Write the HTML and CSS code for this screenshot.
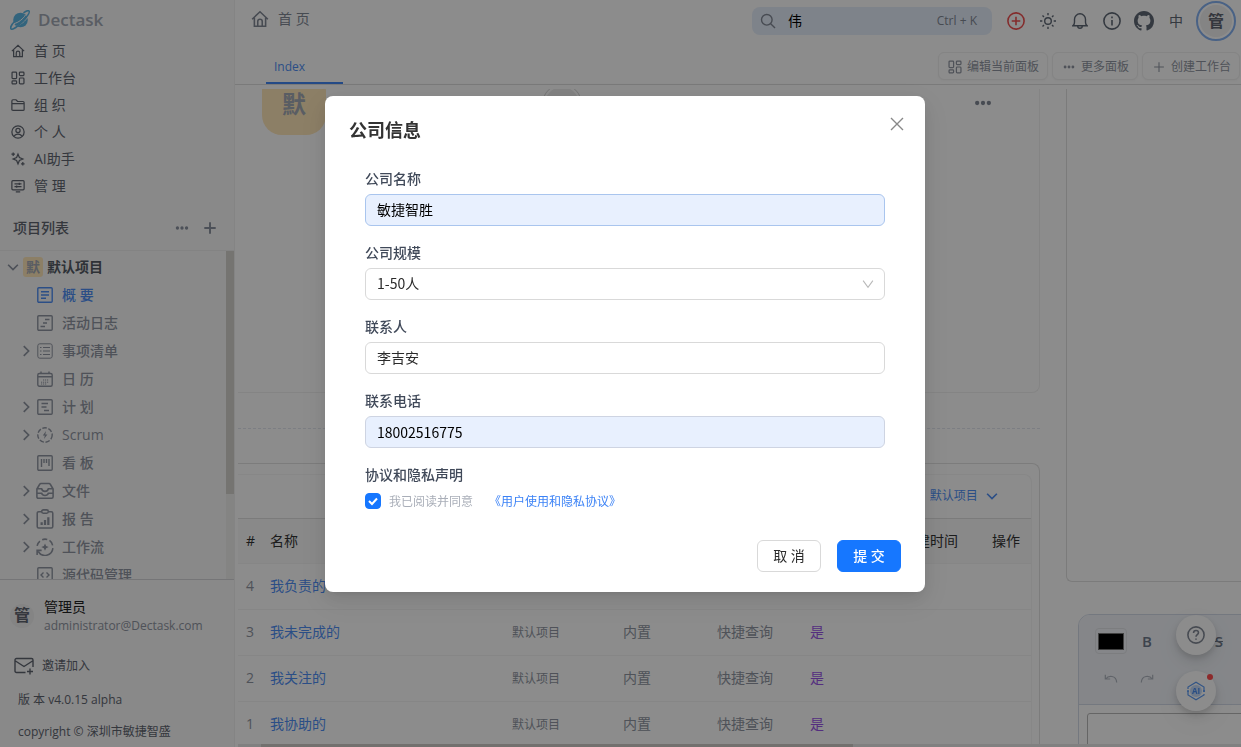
FILE: index.html
```html
<!DOCTYPE html>
<html lang="zh-CN">
<head>
<meta charset="utf-8">
<meta name="viewport" content="width=device-width, initial-scale=1">
<title>Dectask</title>
<link rel="stylesheet" href="styles.css">
</head>
<body>
<svg class="sprite" aria-hidden="true">
  <symbol id="home" viewBox="0 0 16 16"><path d="M1 8.2 8 1.6l7 6.6M3 6.8v7.7h10V6.8M6 14.2v-4a2 2 0 0 1 4 0v4"/></symbol>
  <symbol id="board" viewBox="0 0 16 16"><rect x="1.2" y="1.2" width="5.2" height="7.4" rx="1"/><rect x="9.6" y="1.2" width="5.2" height="4.2" rx="1"/><rect x="1.2" y="11.2" width="5.2" height="3.6" rx="1"/><rect x="9.6" y="8" width="5.2" height="6.8" rx="1"/></symbol>
  <symbol id="folder" viewBox="0 0 16 16"><path d="M1 13V3.4C1 2.6 1.5 2 2.3 2h3.4l1.8 2h6.2c.8 0 1.3.6 1.3 1.4V13c0 .8-.5 1.2-1.3 1.2H2.3C1.5 14.2 1 13.8 1 13zM1 6.5h14"/></symbol>
  <symbol id="person" viewBox="0 0 16 16"><circle cx="8" cy="8" r="7"/><circle cx="8" cy="6.2" r="2.4"/><path d="M3.6 13c.8-2 2.4-2.6 4.4-2.600s3.600.6 4.400 2.600"/></symbol>
  <symbol id="spark" viewBox="0 0 16 16"><path d="M8 2.500 9.600 6.400 13.500 8 9.600 9.600 8 13.500 6.400 9.600 2.500 8l3.900-1.600zM2.500.5v4M.5 2.500h4M13.500 11.500v4M11.500 13.500h4"/></symbol>
  <symbol id="manage" viewBox="0 0 16 16"><rect x="1" y="1.800" width="14" height="10.600" rx="1.200"/><path d="M4 5.500h8M9.500 4.200v2.600M4 8.800h8M6.500 7.500v2.600M5.500 14.600h5"/></symbol>
  <symbol id="dots" viewBox="0 0 16 16"><g fill="currentColor" stroke="none"><circle cx="2.800" cy="8" r="1.900"/><circle cx="8" cy="8" r="1.900"/><circle cx="13.200" cy="8" r="1.900"/></g></symbol>
  <symbol id="plus" viewBox="0 0 16 16"><path d="M8 1.500v13M1.500 8h13"/></symbol>
  <symbol id="down" viewBox="0 0 16 16"><path d="M1.500 5 8 11.500 14.500 5"/></symbol>
  <symbol id="caret" viewBox="0 0 16 16"><path d="M1.500 3.500 8 12.500l6.500-9"/></symbol>
  <symbol id="right" viewBox="0 0 16 16"><path d="M5 1.500 11.500 8 5 14.500"/></symbol>
  <symbol id="overview" viewBox="0 0 16 16"><rect x=".8" y=".8" width="14.400" height="14.400" rx="1"/><path d="M4 4.800h8M4 8h8M4 11.200h5"/></symbol>
  <symbol id="log" viewBox="0 0 16 16"><rect x=".8" y=".8" width="14.400" height="14.400" rx="1"/><path d="M8 4.500h4.500M6 8h4M3.500 11.500H8"/></symbol>
  <symbol id="list" viewBox="0 0 16 16"><rect x=".8" y=".8" width="14.400" height="14.400" rx="2"/><path d="M3 4.500h1.500M6 4.500h7M3 8h1.500M6 8h7M3 11.500h1.500M6 11.500h7"/></symbol>
  <symbol id="calendar" viewBox="0 0 16 16"><rect x=".8" y="2.500" width="14.400" height="12.700" rx="1.500"/><path d="M1 5.800h14M4 .5v2.500M12 .5v2.500"/><path d="M6 9h6M4 11.200h8M4 13h6" stroke-dasharray="1.200 .8" stroke-width="1"/></symbol>
  <symbol id="plan" viewBox="0 0 16 16"><rect x=".8" y=".8" width="14.400" height="14.400" rx="1"/><path d="M4.500 4.500h6.500M4.500 8h5M7 11.500h5"/></symbol>
  <symbol id="scrum" viewBox="0 0 16 16"><circle cx="8" cy="8" r="7.200" stroke-dasharray="4.500 1.700"/><path d="M9 4 5.800 8.500h2L7 12l3.400-4.500H8.300z" fill="currentColor" stroke="none"/></symbol>
  <symbol id="kanban" viewBox="0 0 16 16"><rect x=".8" y=".8" width="14.400" height="14.400" rx="1"/><path d="M4.500 4v8M7 4v4M9.500 4v4M12 4v7"/></symbol>
  <symbol id="files" viewBox="0 0 16 16"><path d="M.8 6.200 3.300 2c.3-.4.600-.6 1.100-.6h7.200c.5 0 .8.200 1.100.6l2.500 4.200v7c0 .8-.5 1.300-1.300 1.300H2.100c-.8 0-1.300-.5-1.300-1.300zM1 6h4c.5 1.800 1.500 2.300 3 2.300S10.500 7.800 11 6h4M1 10h4c.5 1.500 1.500 2 3 2s2.500-.5 3-2h4"/></symbol>
  <symbol id="report" viewBox="0 0 16 18"><path d="M5 2.500H2.300C1.500 2.500 1 3 1 3.800v12c0 .8.5 1.300 1.300 1.300h11.400c.8 0 1.300-.5 1.300-1.300v-12c0-.8-.5-1.300-1.300-1.300H11"/><rect x="5" y=".8" width="6" height="3" rx="1.500"/><path d="M5 12v2.500M8 10v4.500M11 7.500v7" stroke-width="2"/></symbol>
  <symbol id="flow" viewBox="0 0 16 16"><path d="M1 7A7 7 0 0 1 3.500 2.700M5.500 1.500a7 7 0 0 1 4.500-.2M12 2.200A7 7 0 0 1 14.800 6.500M15 9A7 7 0 0 1 2 12M1 15v-4h4"/><path d="m8 4.800 1 2.300 2.300.9L9 9l-1 2.300L7 9l-2.300-1L7 7.100z" fill="currentColor" stroke="none"/></symbol>
  <symbol id="code" viewBox="0 0 16 16"><rect x=".8" y=".8" width="14.400" height="14.400" rx="1"/><path d="M6.500 5.500 4 8l2.500 2.500M9.500 5.500 12 8l-2.500 2.500"/></symbol>
  <symbol id="mail" viewBox="0 0 20 18"><path d="M11.500 15.500H2.500c-.9 0-1.500-.6-1.500-1.500V3c0-.9.600-1.500 1.500-1.500h15c.9 0 1.500.6 1.500 1.500v7M1.500 4l8.500 5.500L18.500 4M16 11.500v6M13 14.500h6"/></symbol>
  <symbol id="search" viewBox="0 0 16 16"><circle cx="6.800" cy="6.800" r="5.300"/><path d="m10.700 10.700 4.300 4.300"/></symbol>
  <symbol id="pluscircle" viewBox="0 0 16 16"><circle cx="8" cy="8" r="7.200"/><path d="M8 4.200v7.600M4.200 8h7.600"/></symbol>
  <symbol id="sun" viewBox="0 0 16 16"><circle cx="8" cy="8" r="3.300"/><path d="M8 0v2.300M8 13.700V16M0 8h2.300M13.700 8H16M2.500 2.500l1.500 1.500M12 12l1.500 1.500M2.500 13.500 4 12M12 4l1.500-1.500"/></symbol>
  <symbol id="bell" viewBox="0 0 16 16"><path d="M.8 12.800h14.400c-1.200-1-1.700-2-1.700-3.600V6.300a5.500 5.500 0 0 0-11 0v2.900c0 1.600-.5 2.600-1.700 3.600zM5.700 13a2.300 2.300 0 0 0 4.600 0"/></symbol>
  <symbol id="info" viewBox="0 0 16 16"><circle cx="8" cy="8" r="7.200"/><path d="M8 7v5M8 4v1.500"/></symbol>
  <symbol id="github" viewBox="0 0 16 16"><path fill="currentColor" stroke="none" d="M8 0C3.580 0 0 3.580 0 8c0 3.540 2.290 6.530 5.470 7.590.4.070.55-.17.55-.38 0-.19-.01-.82-.01-1.490-2.010.37-2.530-.49-2.690-.94-.09-.23-.48-.94-.82-1.130-.28-.15-.68-.52-.01-.53.63-.01 1.080.58 1.230.82.72 1.210 1.870.87 2.330.66.070-.52.280-.87.510-1.070-1.780-.2-3.640-.89-3.640-3.950 0-.87.310-1.590.82-2.150-.08-.2-.36-1.020.08-2.120 0 0 .67-.21 2.200.82.640-.18 1.320-.27 2-.27s1.360.09 2 .27c1.530-1.040 2.200-.82 2.200-.82.440 1.100.16 1.920.08 2.120.51.560.82 1.270.82 2.150 0 3.070-1.870 3.750-3.650 3.950.29.250.54.730.54 1.480 0 1.070-.01 1.930-.01 2.200 0 .21.15.46.55.38A8.010 8.010 0 0 0 16 8c0-4.420-3.580-8-8-8z"/></symbol>
  <symbol id="close" viewBox="0 0 16 16"><path d="m2 2 12 12M14 2 2 14"/></symbol>
  <symbol id="undo" viewBox="0 0 16 12"><path d="M1.500 1v5H7M2 6c3-4.500 12-4.500 12.500 4"/></symbol>
  <symbol id="redo" viewBox="0 0 16 12"><path d="M14.500 1v5H9M14 6C11 1.500 2 1.500 1.500 10"/></symbol>
  <symbol id="help" viewBox="0 0 16 16"><circle cx="8" cy="8" r="7.200"/><path d="M5.800 6.300c0-1.500 1-2.300 2.200-2.300s2.200.8 2.200 2c0 1.600-2.200 1.700-2.200 3.500M8 11v1.300"/></symbol>
</svg>

<div class="app">
  <aside class="sidebar">
    <div class="brand">
      <svg class="brand-logo" viewBox="0 0 20 20" aria-hidden="true"><circle cx="10.500" cy="10" r="7.300" fill="#5cb6e4"/><path d="M4 13.500C8 13 13.500 8.500 15.500 5M6.500 16c4-1 9.500-5.500 11-9" fill="none" stroke="#fff" stroke-width="1"/><path d="M4.500 11.500C1 15 .3 18 1 19c1.500 1.200 7-2.500 12-8S20 2 19 1c-.7-.7-3 0-5.500 1.800" fill="none" stroke="#5cb6e4" stroke-width="1.600"/></svg>
      <span>Dectask</span>
    </div>
    <nav class="menu">
      <a href="#"><svg class="icon i14"><use href="#home"/></svg>首 页</a>
      <a href="#"><svg class="icon i14"><use href="#board"/></svg>工作台</a>
      <a href="#"><svg class="icon i14"><use href="#folder"/></svg>组 织</a>
      <a href="#"><svg class="icon i14"><use href="#person"/></svg>个 人</a>
      <a href="#"><svg class="icon i14"><use href="#spark"/></svg>AI助手</a>
      <a href="#"><svg class="icon i14"><use href="#manage"/></svg>管 理</a>
    </nav>
    <div class="section">
      <h2>项目列表</h2>
      <button class="plain" aria-label="更多"><svg class="icon i14"><use href="#dots"/></svg></button>
      <button class="plain" aria-label="新建项目"><svg class="icon i14 bold"><use href="#plus"/></svg></button>
    </div>
    <div class="tree-wrap">
      <nav class="tree">
        <a class="root" href="#"><svg class="icon i12 bold"><use href="#down"/></svg><span class="tile">默</span>默认项目</a>
        <a class="leaf current" href="#"><i></i><svg class="icon i16"><use href="#overview"/></svg><span>概 要</span></a>
        <a class="leaf" href="#"><i></i><svg class="icon i16"><use href="#log"/></svg><span>活动日志</span></a>
        <a class="leaf" href="#"><svg class="icon i12 bold"><use href="#right"/></svg><svg class="icon i16 thin"><use href="#list"/></svg><span>事项清单</span></a>
        <a class="leaf" href="#"><i></i><svg class="icon i16"><use href="#calendar"/></svg><span>日 历</span></a>
        <a class="leaf" href="#"><svg class="icon i12 bold"><use href="#right"/></svg><svg class="icon i16"><use href="#plan"/></svg><span>计 划</span></a>
        <a class="leaf" href="#"><svg class="icon i12 bold"><use href="#right"/></svg><svg class="icon i16"><use href="#scrum"/></svg><span>Scrum</span></a>
        <a class="leaf" href="#"><i></i><svg class="icon i16"><use href="#kanban"/></svg><span>看 板</span></a>
        <a class="leaf" href="#"><svg class="icon i12 bold"><use href="#right"/></svg><svg class="icon i18"><use href="#files"/></svg><span>文件</span></a>
        <a class="leaf" href="#"><svg class="icon i12 bold"><use href="#right"/></svg><svg class="icon i20"><use href="#report"/></svg><span>报 告</span></a>
        <a class="leaf" href="#"><svg class="icon i12 bold"><use href="#right"/></svg><svg class="icon i18"><use href="#flow"/></svg><span>工作流</span></a>
        <a class="leaf" href="#"><i></i><svg class="icon i16"><use href="#code"/></svg><span>源代码管理</span></a>
      </nav>
      <div class="vbar"><div class="vthumb"></div></div>
    </div>
    <footer class="side-foot">
      <div class="user">
        <span class="user-avatar">管</span>
        <div><div class="user-name">管理员</div><div class="user-mail">administrator@Dectask.com</div></div>
      </div>
      <a class="invite" href="#"><svg class="icon i20"><use href="#mail"/></svg>邀请加入</a>
      <p>版 本 v4.0.15 alpha</p>
      <p>copyright © 深圳市敏捷智盛</p>
    </footer>
  </aside>

  <main class="main">
    <header class="topbar">
      <a class="crumb" href="#"><svg class="icon i18"><use href="#home"/></svg>首 页</a>
      <label class="search"><svg class="icon i16"><use href="#search"/></svg><input type="text" value="伟" aria-label="搜索"><kbd>Ctrl + K</kbd></label>
      <div class="tools">
        <button class="plain add" aria-label="新建"><svg class="icon i18"><use href="#pluscircle"/></svg></button>
        <button class="plain" aria-label="主题"><svg class="icon i16"><use href="#sun"/></svg></button>
        <button class="plain" aria-label="通知"><svg class="icon i16"><use href="#bell"/></svg></button>
        <button class="plain" aria-label="关于"><svg class="icon i18"><use href="#info"/></svg></button>
        <button class="plain" aria-label="GitHub"><svg class="icon i20"><use href="#github"/></svg></button>
        <button class="plain">中</button>
      </div>
      <button class="plain me" aria-label="账户"><span>管</span></button>
    </header>
    <div class="tabs">
      <a class="tab" href="#">Index</a>
      <div class="tab-actions">
        <button class="chip"><svg class="icon i14"><use href="#board"/></svg>编辑当前面板</button>
        <button class="chip wide"><svg class="icon i12"><use href="#dots"/></svg>更多面板</button>
        <button class="chip wide"><svg class="icon i12"><use href="#plus"/></svg>创建工作台</button>
      </div>
    </div>

    <div class="viewport">
      <div class="canvas">
        <div class="column">
          <section class="project">
            <span class="project-tile">默</span>
            <span class="project-dot"></span>
            <button class="plain" aria-label="更多操作"><svg class="icon i18"><use href="#dots"/></svg></button>
          </section>
          <hr class="split">
          <section class="panel">
            <div class="panel-inner">
              <div class="panel-head"><button class="plain filter">默认项目<svg class="icon i12 bold"><use href="#down"/></svg></button></div>
              <table>
                <thead><tr><th class="c-id">#</th><th class="c-name">名称</th><th class="c-project"></th><th class="c-kind"></th><th class="c-type"></th><th class="c-flag"></th><th class="c-time">创建时间</th><th>操作</th></tr></thead>
                <tbody>
                  <tr><td>4</td><td><a href="#">我负责的</a></td><td></td><td></td><td></td><td></td><td></td><td></td></tr>
                  <tr><td>3</td><td><a href="#">我未完成的</a></td><td class="small">默认项目</td><td>内置</td><td>快捷查询</td><td class="yes">是</td><td></td><td></td></tr>
                  <tr><td>2</td><td><a href="#">我关注的</a></td><td class="small">默认项目</td><td>内置</td><td>快捷查询</td><td class="yes">是</td><td></td><td></td></tr>
                  <tr><td>1</td><td><a href="#">我协助的</a></td><td class="small">默认项目</td><td>内置</td><td>快捷查询</td><td class="yes">是</td><td></td><td></td></tr>
                </tbody>
              </table>
            </div>
          </section>
        </div>
        <div class="column">
          <section class="blank"></section>
          <section class="editor">
            <div class="editor-tools">
              <div class="tool-row"><button class="plain swatch" aria-label="颜色"><span></span></button><button class="plain tool">B</button><button class="plain tool slant">I</button><button class="plain tool strike">S</button></div>
              <div class="tool-row faint"><button class="plain tool" aria-label="撤销"><svg class="icon i14"><use href="#undo"/></svg></button><button class="plain tool" aria-label="重做"><svg class="icon i14"><use href="#redo"/></svg></button></div>
            </div>
            <div class="editor-body"><textarea aria-label="内容"></textarea></div>
          </section>
        </div>
      </div>
      <div class="hbar"><div class="hthumb"></div></div>
    </div>
  </main>
</div>

<div class="floats">
  <button class="plain float" aria-label="帮助"><svg class="icon i18"><use href="#help"/></svg></button>
  <button class="plain float" aria-label="AI助手">
    <svg class="ai" viewBox="0 0 20 20"><path d="M2 8V6l8-4.800L18 6v5M18 13v1l-8 4.800L2 14v-4" fill="none" stroke="#5b9bf5" stroke-width="1.200"/><circle cx="2" cy="10" r="1" fill="#5b9bf5"/><circle cx="18" cy="10" r="1" fill="#5b9bf5"/><circle cx="10" cy="10" r="6" fill="#c5dbf9"/><text x="10" y="13" text-anchor="middle">AI</text></svg>
    <span class="badge"></span>
  </button>
</div>

<div class="mask">
  <div class="dialog" role="dialog" aria-modal="true" aria-labelledby="dlg-title">
    <div class="dialog-head">
      <h1 id="dlg-title">公司信息</h1>
      <button class="plain" aria-label="关闭"><svg class="icon i16"><use href="#close"/></svg></button>
    </div>
    <form>
      <div class="fields">
        <div class="field"><label for="company">公司名称</label><input class="box filled hover" id="company" type="text" value="敏捷智胜"></div>
        <div class="field"><label for="size">公司规模</label><div class="select"><select class="box" id="size"><option>1-50人</option></select><svg class="icon i12"><use href="#caret"/></svg></div></div>
        <div class="field"><label for="contact">联系人</label><input class="box" id="contact" type="text" value="李吉安"></div>
        <div class="field"><label for="phone">联系电话</label><input class="box filled" id="phone" type="tel" value="18002516775"></div>
        <div class="field"><span class="legend">协议和隐私声明</span><div class="agree"><span class="tick"><input type="checkbox" id="agree" checked><svg viewBox="0 0 16 16" aria-hidden="true"><path d="m4 8 3 3 5-5.500"/></svg></span><label for="agree">我已阅读并同意</label><a href="#">《用户使用和隐私协议》</a></div></div>
      </div>
      <div class="buttons"><button class="btn" type="button">取 消</button><button class="btn primary" type="submit">提 交</button></div>
    </form>
  </div>
</div>
</body>
</html>
```
FILE: styles.css
```css
* { box-sizing: border-box; }
html, body { height: 100%; }
body {
  margin: 0;
  overflow: hidden;
  background: #fff;
  color: #828996;
  font: 14px/22px "Open Sans", "Noto Sans CJK SC", sans-serif;
}
a { color: inherit; text-decoration: none; }
button, input, select, textarea { font: inherit; color: inherit; }
h1, h2, p, hr { margin: 0; }
.sprite { position: absolute; width: 0; height: 0; }
.plain {
  display: flex;
  align-items: center;
  justify-content: center;
  padding: 0;
  border: 0;
  background: none;
}
.icon { flex: none; fill: none; stroke: currentColor; stroke-width: 1.4; display: block; }
.bold { stroke-width: 2.2; }
.thin { stroke-width: 1; }
.i12 { width: 12px; height: 12px; }
.i14 { width: 14px; height: 14px; }
.i16 { width: 16px; height: 16px; }
.i18 { width: 18px; height: 18px; }
.i20 { width: 20px; height: 20px; }

.app { display: flex; height: 100vh; }

.sidebar {
  display: flex;
  flex: none;
  flex-direction: column;
  width: 235px;
  border-right: 1px solid #f0f0f0;
  background: #f9f9f9;
}
.brand {
  display: flex;
  align-items: center;
  gap: 8px;
  height: 37px;
  padding: 3px 10px 0;
  color: #a3a9b5;
  font-size: 17px;
  font-weight: 600;
}
.brand-logo { width: 20px; height: 20px; }
.menu a {
  display: flex;
  align-items: center;
  gap: 9px;
  height: 27px;
  padding-left: 11px;
  color: #5f6570;
}
.section {
  display: flex;
  align-items: center;
  gap: 14px;
  height: 52px;
  padding: 7px 17px 0 13px;
  border-bottom: 1px solid #efefef;
}
.section h2 { flex: 1; color: #5f6570; font-size: 14px; font-weight: 500; }
.section .plain { color: #8b92a0; }
.tree-wrap { display: flex; flex: 1; min-height: 0; overflow: hidden; background: #fafafa; }
.tree { flex: 1; padding-top: 2px; }
.root, .leaf { align-items: center; height: 28px; color: #9096a2; font-weight: 500; }
.root { display: flex; gap: 4px; padding-left: 7px; color: #555b65; font-weight: 600; }
.root .icon { color: #8b92a0; }
.tile {
  width: 20px;
  height: 20px;
  border-radius: 3px;
  background: #ffe7ba;
  color: #a3a9b5;
  line-height: 20px;
  text-align: center;
}
.leaf {
  display: grid;
  grid-template-columns: 12px 26px 1fr;
  padding-left: 20px;
}
.leaf .icon + .icon, .leaf i + .icon { justify-self: center; }
.leaf span { padding-left: 4px; }
.leaf.current { color: #4f8ff5; }
.vbar { width: 8px; background: #f0f0ee; }
.vthumb { height: 74%; background: #d5d3ce; }
.side-foot {
  flex: none;
  height: 168px;
  padding-left: 10px;
  border-top: 1px solid #d5d5d9;
  color: #5f6570;
  font-size: 12px;
}
.user { display: flex; align-items: center; gap: 10px; padding-top: 16px; height: 55px; }
.user-avatar {
  width: 24px;
  height: 24px;
  border-radius: 50%;
  background: #f0f0f0;
  color: #5f6570;
  font-size: 16px;
  font-weight: 600;
  line-height: 22px;
  text-align: center;
}
.user-name { color: #222; font-size: 14px; line-height: 20px; }
.user-mail { color: #9096a2; line-height: 18px; }
.invite { display: flex; align-items: center; gap: 8px; padding: 20px 4px 12px; }
.side-foot p { padding: 0 8px 10px; }

.main { display: flex; flex: 1; flex-direction: column; min-width: 0; }
.topbar { display: flex; align-items: center; height: 42px; padding: 0 5px 0 16px; }
.crumb { display: flex; flex: 1; align-items: center; gap: 9px; padding-bottom: 4px; }
.search {
  display: flex;
  align-items: center;
  gap: 12px;
  width: 240px;
  height: 28px;
  padding: 0 15px 0 8px;
  border-radius: 8px;
  background: #e6effb;
}
.search input { flex: 1; min-width: 0; border: 0; padding: 0; background: none; color: #000; outline: 0; }
.search kbd { font: 12px/20px "Open Sans", sans-serif; }
.tools { display: flex; margin: 0 4px 0 8px; color: #5f6875; }
.tools .plain { width: 32px; height: 28px; }
.tools .add { color: #f05050; }
.me { width: 40px; height: 40px; border: 2px solid #86b2f3; border-radius: 50%; }
.me span {
  width: 32px;
  height: 32px;
  border-radius: 50%;
  background: #f0f0f0;
  color: #5f6570;
  font-size: 16px;
  font-weight: 600;
  line-height: 32px;
}
.tabs {
  display: flex;
  align-items: flex-end;
  justify-content: space-between;
  height: 43px;
  border-bottom: 1px solid #dedede;
  padding: 0 0 0 31px;
}
.tab {
  width: 77px;
  height: 32px;
  padding-left: 8px;
  border-bottom: 2px solid #4287f5;
  color: #4f8ff5;
  font-size: 12px;
  line-height: 30px;
}
.tab-actions { display: flex; gap: 4px; padding: 0 1px 4px 0; }
.chip {
  display: flex;
  align-items: center;
  gap: 5px;
  height: 28px;
  padding: 2px 8px 0 9px;
  border: 1px solid #f0f0f0;
  border-radius: 6px;
  background: #fff;
  box-shadow: 0 1px 2px #00000008;
  color: #9096a2;
  font-size: 12px;
}
.wide { gap: 6px; padding-left: 10px; }

.viewport { display: flex; flex: 1; flex-direction: column; min-height: 0; padding: 4px 0 0 3px; overflow: hidden; }
.canvas {
  display: grid;
  flex: 1;
  grid-template-columns: 29fr 31fr;
  gap: 26px;
  width: 168%;
  min-height: 0;
  overflow: hidden;
}
.column { min-width: 0; }
.project {
  display: flex;
  align-items: flex-start;
  justify-content: space-between;
  height: 304px;
  padding: 0 47px 0 24px;
  border: solid #f1f1f1;
  border-width: 0 1px 1px 0;
  border-radius: 0 0 8px 0;
}
.project-tile {
  width: 64px;
  height: 64px;
  margin-top: -18px;
  border-radius: 20px;
  background: #ffe7ba;
  color: #a3a9b5;
  font-size: 24px;
  font-weight: 700;
  line-height: 66px;
  text-align: center;
}
.project-dot {
  width: 40px;
  height: 40px;
  margin: -5px auto 0 216px;
  border: 1px solid #d8d8d8;
  border-radius: 50%;
  background: #ececec;
  box-shadow: inset 0 0 0 2px #fff;
}
.project .plain { padding-top: 5px; }
.split { height: 0; margin-top: 35px; border: 0; border-top: 1px dashed #e2e6ee; }
.panel { margin-top: 34px; padding-right: 7px; border: solid #e2e2e2; border-width: 1px 1px 0 0; border-radius: 0 8px 0 0; }
.panel-inner { margin-top: 10px; border: solid #f6f6f6; border-width: 1px 1px 0 0; border-radius: 0 8px 0 0; }
.panel-head { display: flex; justify-content: flex-end; height: 44px; padding: 0 33px 2px; border-bottom: 1px solid #e0e0e0; }
.filter { gap: 8px; color: #4f8ff5; font-size: 12px; }
table { width: 100%; border-collapse: separate; border-spacing: 0; table-layout: fixed; }
th, td { height: 46px; padding: 0 8px; border-bottom: 1px solid #f5f5f5; text-align: left; white-space: nowrap; }
th { height: 45px; background: #f9fafa; color: #333; font-weight: 400; }
td { padding-bottom: 2px; color: #9096a2; }
td a { color: #4f8ff5; }
td.small { padding-bottom: 0; font-size: 12px; }
td.yes { color: #9a55e8; }
.c-id { width: 24px; }
.c-name { width: 242px; }
.c-project { width: 111px; }
.c-kind { width: 94px; }
.c-type { width: 93px; }
.c-flag { width: 92px; }
.c-time { width: 90px; }
.blank { height: 493px; border: solid #e0e0e0; border-width: 0 0 1px 1px; border-radius: 0 0 0 6px; }
.editor { margin: 32px 0 0 12px; border: 1px solid #d3dae8; border-radius: 12px 0 0 0; overflow: hidden; }
.editor-tools { height: 90px; padding: 7px 14px; border-bottom: 1px solid #d3dae8; background: #f2f5fa; }
.tool-row { display: flex; align-items: center; gap: 4px; height: 38px; color: #707b8c; }
.tool { width: 32px; height: 28px; font-size: 15px; font-weight: 600; }
.slant { font-style: italic; }
.faint { color: #b0b5bf; padding-left: 2px; }
.strike { text-decoration: line-through; }
.swatch { width: 32px; height: 26px; margin: 0 2px; border: 1px solid #e2e4e8; border-radius: 4px; }
.swatch span { width: 26px; height: 17px; background: #000; border: 1px solid #777; }
.tool-row .swatch + .tool { margin-left: -2px; }
.editor-body { padding: 8px; }
.editor-body textarea { display: block; width: 100%; height: 120px; border: 1px solid #b9b9b9; border-radius: 3px; background: #fff; resize: none; }
.hbar { flex: none; height: 3px; background: #e9e9e9; }
.hthumb { width: 59%; height: 3px; margin-left: 23px; background: #d0ccc8; }

.floats { position: fixed; right: 25px; bottom: 36px; display: grid; gap: 16px; }
.float { position: relative; width: 40px; height: 40px; border-radius: 50%; background: #fff; box-shadow: 0 6px 16px #00000014, 0 3px 6px #0000001f, 0 9px 28px #0000000d; }
.ai { width: 20px; height: 20px; }
.ai text { fill: #4a8df0; font: 700 8px "Open Sans", sans-serif; }
.badge { position: absolute; top: 3px; right: 3px; width: 6px; height: 6px; border-radius: 50%; background: #ff4d4f; }

.mask {
  position: fixed;
  inset: 0;
  display: flex;
  align-items: flex-start;
  justify-content: center;
  padding: 96px 0 0 9px;
  background: #00000073;
}
.dialog {
  width: 600px;
  padding: 20px 24px;
  border-radius: 8px;
  background: #fff;
  box-shadow: 0 6px 16px #00000014, 0 3px 6px -4px #0000001f, 0 9px 28px 8px #0000000d;
}
.dialog-head { display: flex; justify-content: space-between; }
.dialog-head h1 { color: #333; font-size: 18px; font-weight: 600; line-height: 28px; }
.dialog-head .plain { width: 16px; height: 16px; margin-right: -4px; color: #888; }
.fields { display: grid; gap: 16px; padding: 24px 16px 28px; }
.field { display: grid; gap: 4px; }
.field > label, .legend { color: #404959; font-weight: 500; }
.box {
  width: 100%;
  height: 32px;
  padding: 0 11px 2px;
  border: 1px solid #d9d9d9;
  border-radius: 6px;
  background: #fff;
  color: #2b2b2b;
  outline: 0;
}
.filled { border-color: #ced4e2; background: #e8f0fe; color: #000; }
.hover { border-color: #a9c5ee; }
#phone { padding-bottom: 0; font-family: "Noto Sans CJK SC", sans-serif; }
.select { position: relative; }
.select select { display: block; appearance: none; font-family: "Noto Sans CJK SC", sans-serif; }
.select .icon { position: absolute; top: 10px; right: 11px; color: #b8b8b8; pointer-events: none; }
.agree { display: flex; align-items: center; gap: 8px; height: 22px; font-size: 12px; line-height: 24px; }
.agree label { padding: 2px 8px 0 0; color: #a9aeb8; }
.agree a { padding-top: 2px; color: #3b82f6; }
.tick { display: grid; width: 16px; height: 16px; }
.tick input, .tick svg { grid-area: 1 / 1; width: 16px; height: 16px; margin: 0; }
.tick input { appearance: none; border: 1px solid #d9d9d9; border-radius: 4px; }
.tick input:checked { border-color: #1677ff; background: #1677ff; }
.tick svg { fill: none; stroke: #fff; stroke-width: 2; pointer-events: none; }
.buttons { display: flex; justify-content: flex-end; gap: 16px; }
.btn { min-width: 64px; height: 32px; padding: 0 14px; border: 1px solid #d9d9d9; border-radius: 6px; background: #fff; color: #2b2b2b; }
.primary { border-color: #1677ff; background: #1677ff; color: #fff; font-weight: 500; }
```
